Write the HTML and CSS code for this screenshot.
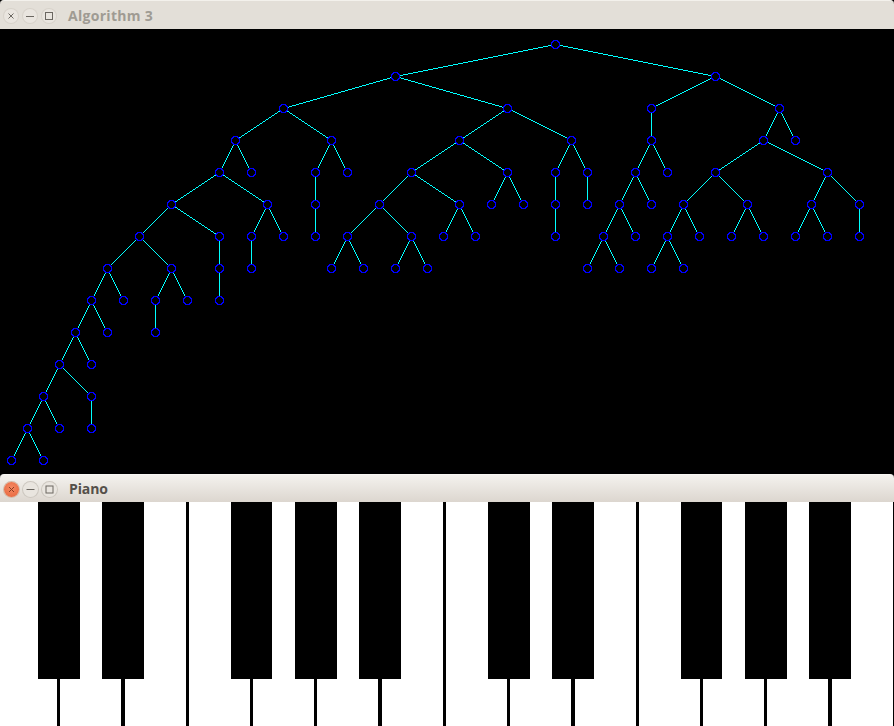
FILE: index.html
```html
<!DOCTYPE html>
<html lang="en">
<head>
<meta charset="utf-8">
<title>Algorithm 3 and Piano</title>
<link rel="stylesheet" href="styles.css">
</head>
<body>
<div class="desktop">
  <section class="window tree-window">
    <header class="titlebar titlebar-inactive">
      <div class="controls">
        <span class="control"><svg viewBox="0 0 14 14"><path d="M4.5 4.5l5 5M9.5 4.5l-5 5"/></svg></span>
        <span class="control"><svg viewBox="0 0 14 14"><path d="M3 7.5h8"/></svg></span>
        <span class="control"><svg viewBox="0 0 14 14"><rect x="3.5" y="3.5" width="7" height="7"/></svg></span>
      </div>
      <h1 class="title">Algorithm 3</h1>
    </header>
    <canvas class="tree" id="tree" width="894" height="445"></canvas>
  </section>
  <section class="window piano-window">
    <header class="titlebar titlebar-active">
      <div class="controls">
        <span class="control control-close"><svg viewBox="0 0 15 15"><path d="M5 5l5 5M10 5l-5 5"/></svg></span>
        <span class="control"><svg viewBox="0 0 15 15"><path d="M3.5 7.5h8"/></svg></span>
        <span class="control"><svg viewBox="0 0 15 15"><rect x="4" y="4" width="7" height="7"/></svg></span>
      </div>
      <h1 class="title">Piano</h1>
    </header>
    <div class="piano">
      <div class="white-keys">
        <span class="white-key first"></span>
        <span class="white-key wide"></span>
        <span class="white-key"></span>
        <span class="white-key"></span>
        <span class="white-key"></span>
        <span class="white-key wide"></span>
        <span class="white-key"></span>
        <span class="white-key"></span>
        <span class="white-key wide"></span>
        <span class="white-key"></span>
        <span class="white-key"></span>
        <span class="white-key"></span>
        <span class="white-key wide"></span>
        <span class="white-key"></span>
      </div>
      <div class="black-keys">
        <span class="black-key b1"></span>
        <span class="black-key b2"></span>
        <span class="black-key b3"></span>
        <span class="black-key b4"></span>
        <span class="black-key b5"></span>
        <span class="black-key b6"></span>
        <span class="black-key b7"></span>
        <span class="black-key b8"></span>
        <span class="black-key b9"></span>
        <span class="black-key b10"></span>
      </div>
    </div>
  </section>
</div>
<script src="tree.js"></script>
</body>
</html>
```
FILE: styles.css
```css
html, body {
  margin: 0;
  padding: 0;
  background: #000;
}
.desktop {
  width: 894px;
  height: 726px;
  overflow: hidden;
  display: flex;
  flex-direction: column;
}
.window {
  display: flex;
  flex-direction: column;
}
.titlebar {
  display: flex;
  align-items: center;
  flex: none;
  box-sizing: border-box;
  border-radius: 4px 4px 0 0;
  padding-left: 4px;
}
.titlebar-inactive {
  height: 29px;
  padding-top: 2px;
  background: #e3dfd8;
  border-top: 1px solid #f3f1ec;
}
.titlebar-active {
  height: 28px;
  padding-top: 1px;
  background: linear-gradient(#f4f2ee, #dcd6cf);
  border-top: 1px solid #f8f7f4;
}
.controls {
  display: flex;
}
.titlebar-inactive .controls {
  gap: 5px;
}
.titlebar-active .controls {
  gap: 4px;
}
.control {
  border-radius: 50%;
  background: #e9e5df;
  box-shadow: 0 0 0 1px #d8d3cb;
  display: flex;
}
.titlebar-inactive .control {
  width: 14px;
  height: 14px;
}
.titlebar-active .control {
  width: 15px;
  height: 15px;
  box-shadow: 0 0 0 1px #cdc8c0;
}
.control svg {
  width: 100%;
  height: 100%;
  fill: none;
  stroke: #6b6761;
  stroke-width: 1;
}
.titlebar-active .control-close {
  background: radial-gradient(circle at 50% 40%, #f58a63, #e5633a);
  box-shadow: 0 0 0 1px #d3bba9;
}
.control-close svg {
  stroke: #8a3c22;
}
.title {
  margin: 0 0 2px 12px;
  font: bold 14px "Open Sans", "Liberation Sans", sans-serif;
}
.titlebar-inactive .title {
  color: #9f9b93;
  letter-spacing: 0.3px;
}
.titlebar-active .title {
  color: #55504a;
  letter-spacing: -0.1px;
}
.tree {
  display: block;
  background: #000;
}
.piano {
  position: relative;
  height: 224px;
  overflow: hidden;
  background: #fff;
}
.white-keys {
  display: flex;
  height: 100%;
}
.white-key {
  flex: none;
  width: 64px;
  box-sizing: border-box;
  border-right: 3px solid #000;
}
.white-key.first {
  width: 60px;
}
.white-key.wide {
  width: 65px;
  border-right-width: 4px;
}
.black-keys {
  position: absolute;
  inset: 0;
}
.black-key {
  position: absolute;
  top: 0;
  height: 177px;
  width: 42px;
  background: #000;
}
.b1 { left: 38px; }
.b2 { left: 102px; }
.b3 { left: 231px; width: 41px; }
.b4 { left: 295px; }
.b5 { left: 359px; }
.b6 { left: 488px; }
.b7 { left: 552px; }
.b8 { left: 681px; width: 41px; }
.b9 { left: 745px; }
.b10 { left: 809px; }
```
FILE: tree.js
```js
// Binary tree as [x, ...children]; depth gives y. Drawn pixel by pixel, without antialiasing.
var TREE = [555,
  [395,
    [283,
      [235,
        [219,
          [171,
            [139,
              [107,
                [91,
                  [75,
                    [59,
                      [43, [27, [11], [43]], [59]],
                      [91, [91]]
                    ],
                    [91]
                  ],
                  [107]
                ],
                [123]
              ],
              [171, [155, [155]], [187]]
            ],
            [219, [219, [219]]]
          ],
          [267, [251, [251]], [283]]
        ],
        [251]
      ],
      [331, [315, [315, [315]]], [347]]
    ],
    [507,
      [459,
        [411,
          [379,
            [347, [331], [363]],
            [411, [395], [427]]
          ],
          [459, [443], [475]]
        ],
        [507, [491], [523]]
      ],
      [571, [555, [555, [555]]], [587, [587]]]
    ]
  ],
  [715,
    [651,
      [651,
        [635,
          [619, [603, [587], [619]], [635]],
          [651]
        ],
        [667]
      ]
    ],
    [779,
      [763,
        [715,
          [683, [667, [651], [683]], [699]],
          [747, [731], [763]]
        ],
        [827,
          [811, [795], [827]],
          [859, [859]]
        ]
      ],
      [795]
    ]
  ]
];

var ctx = document.getElementById("tree").getContext("2d");
var TOP = 15;    // y of the root inside the canvas
var STEP = 32;   // rows between depths

function px(x, y) {
  ctx.fillRect(x, y, 1, 1);
}

function line(x0, y0, x1, y1) {
  var dx = Math.abs(x1 - x0), dy = Math.abs(y1 - y0);
  var sx = x0 < x1 ? 1 : -1, sy = y0 < y1 ? 1 : -1;
  var err = dx - dy;
  for (;;) {
    px(x0, y0);
    if (x0 === x1 && y0 === y1) return;
    var e2 = 2 * err;
    if (e2 > -dy) { err -= dy; x0 += sx; }
    if (e2 < dx) { err += dx; y0 += sy; }
  }
}

function walk(node, depth, parentX, parentY, visit) {
  var y = TOP + depth * STEP;
  visit(node[0], y, parentX, parentY);
  for (var i = 1; i < node.length; i++) {
    walk(node[i], depth + 1, node[0], y, visit);
  }
}

var RING = [[0, 4], [1, 4], [2, 4], [2, 3], [3, 3], [3, 2], [4, 2], [4, 1], [4, 0]];

function ring(x, y) {
  ctx.fillStyle = "#000000";
  ctx.fillRect(x - 3, y - 2, 7, 5);
  ctx.fillRect(x - 2, y - 3, 5, 7);
  ctx.fillStyle = "#0000ff";
  RING.forEach(function (p) {
    [-1, 1].forEach(function (a) {
      [-1, 1].forEach(function (b) {
        px(x + a * p[0], y + b * p[1]);
      });
    });
  });
}

ctx.fillStyle = "#00ffff";
walk(TREE, 0, null, null, function (x, y, px0, py0) {
  if (px0 !== null) line(px0, py0, x, y);
});
walk(TREE, 0, null, null, function (x, y) {
  ring(x, y);
});
```
